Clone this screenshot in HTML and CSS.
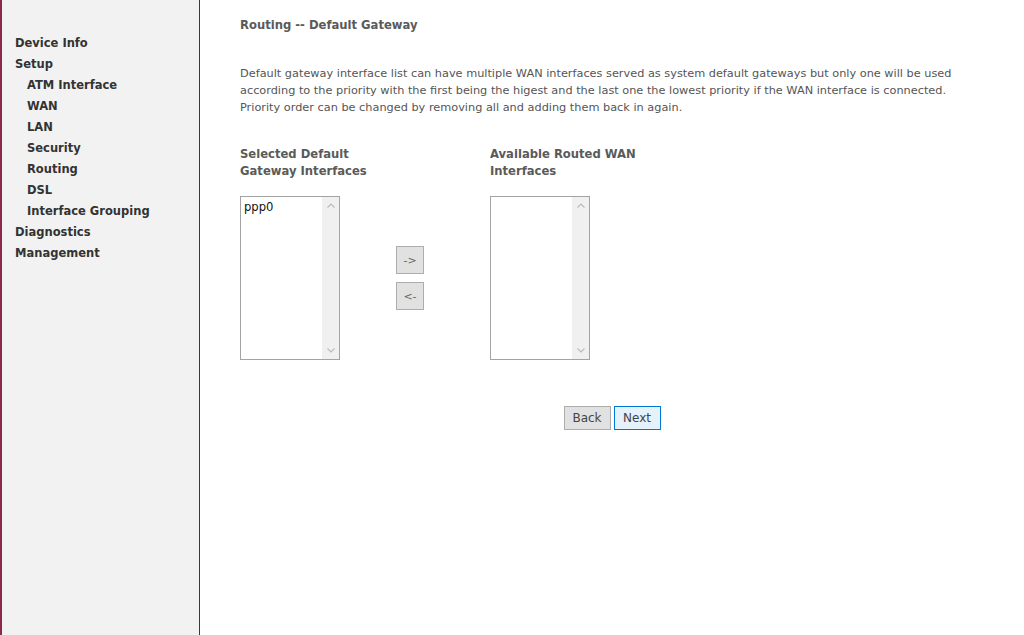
FILE: index.html
```html
<!DOCTYPE html>
<html>
<head>
<meta charset="utf-8">
<title>Routing -- Default Gateway</title>
<link rel="stylesheet" href="styles.css">
</head>
<body>
<div class="page">
  <nav class="sidebar">
    <ul class="menu">
      <li class="top">Device Info</li>
      <li class="top">Setup</li>
      <li class="sub">ATM Interface</li>
      <li class="sub">WAN</li>
      <li class="sub">LAN</li>
      <li class="sub">Security</li>
      <li class="sub">Routing</li>
      <li class="sub">DSL</li>
      <li class="sub">Interface Grouping</li>
      <li class="top">Diagnostics</li>
      <li class="top">Management</li>
    </ul>
  </nav>
  <main class="content">
    <h1 class="title">Routing -- Default Gateway</h1>
    <p class="desc">Default gateway interface list can have multiple WAN interfaces served as system default gateways but only one will be used<br>according to the priority with the first being the higest and the last one the lowest priority if the WAN interface is connected.<br>Priority order can be changed by removing all and adding them back in again.</p>
    <div class="lists">
      <div class="col col-left">
        <div class="col-head">Selected Default<br>Gateway Interfaces</div>
        <div class="listbox">
          <div class="items"><div class="item">ppp0</div></div>
          <div class="track">
            <svg class="arrow" width="8" height="5" viewBox="0 0 8 5"><polyline points="0.5,4.5 4,1 7.5,4.5" fill="none" stroke="#bcbcbc" stroke-width="1.2"/></svg>
            <svg class="arrow" width="8" height="5" viewBox="0 0 8 5"><polyline points="0.5,0.5 4,4 7.5,0.5" fill="none" stroke="#bcbcbc" stroke-width="1.2"/></svg>
          </div>
        </div>
      </div>
      <div class="col col-mid">
        <div class="col-head">&nbsp;<br>&nbsp;</div>
        <div class="movers">
          <button class="mover">-&gt;</button>
          <button class="mover">&lt;-</button>
        </div>
      </div>
      <div class="col col-right">
        <div class="col-head">Available Routed WAN<br>Interfaces</div>
        <div class="listbox">
          <div class="items"></div>
          <div class="track">
            <svg class="arrow" width="8" height="5" viewBox="0 0 8 5"><polyline points="0.5,4.5 4,1 7.5,4.5" fill="none" stroke="#bcbcbc" stroke-width="1.2"/></svg>
            <svg class="arrow" width="8" height="5" viewBox="0 0 8 5"><polyline points="0.5,0.5 4,4 7.5,0.5" fill="none" stroke="#bcbcbc" stroke-width="1.2"/></svg>
          </div>
        </div>
      </div>
    </div>
    <div class="actions">
      <button class="btn">Back</button>
      <button class="btn btn-focus">Next</button>
    </div>
  </main>
</div>
</body>
</html>
```

FILE: styles.css
```css
html, body {
  margin: 0;
  padding: 0;
  background: #ffffff;
  font-family: "DejaVu Sans", Verdana, sans-serif;
}

.page {
  display: flex;
  min-height: 635px;
}

.sidebar {
  width: 197px;
  flex: none;
  background: #f2f2f2;
  border-left: 2px solid #8a2a48;
  border-right: 1px solid #5e2440;
}

.menu {
  list-style: none;
  margin: 0;
  padding: 33px 0 0 0;
}

.menu li {
  font-size: 11.5px;
  font-weight: bold;
  color: #333333;
  line-height: 21px;
  height: 21px;
  white-space: nowrap;
}

.menu .top { padding-left: 13px; }
.menu .sub { padding-left: 25px; }

.content {
  flex: 1;
  padding: 0 40px;
  color: #555555;
}

.title {
  margin: 17px 0 0 0;
  font-size: 11.6px;
  font-weight: bold;
  line-height: 17px;
  color: #5a5a5a;
}

.desc {
  margin: 31px 0 0 0;
  font-size: 11.3px;
  line-height: 17px;
  color: #555555;
}

.lists {
  display: flex;
  margin-top: 30px;
}

.col {
  display: flex;
  flex-direction: column;
}

.col-left { width: 156px; }
.col-mid { width: 94px; }

.col-head {
  font-size: 11.6px;
  font-weight: bold;
  line-height: 17px;
  color: #5a5a5a;
  height: 34px;
  margin-bottom: 16px;
  white-space: nowrap;
}

.listbox {
  width: 98px;
  height: 162px;
  border: 1px solid #a3a3a3;
  display: flex;
  background: #fff;
}

.items {
  flex: 1;
  padding: 3px 0 0 3px;
}

.item {
  font-size: 11.6px;
  line-height: 15px;
  color: #111;
}

.track {
  width: 17px;
  background: #f0f0f0;
  display: flex;
  flex-direction: column;
  justify-content: space-between;
  align-items: center;
  padding: 6px 0;
  box-sizing: border-box;
}

.arrow {
  display: block;
}

.movers {
  height: 164px;
  display: flex;
  flex-direction: column;
  justify-content: center;
  gap: 8px;
}

.mover {
  width: 28px;
  height: 28px;
  padding: 0;
  margin: 0;
  border: 1px solid #adadad;
  background: #e1e1e1;
  font-family: "DejaVu Sans", Verdana, sans-serif;
  font-size: 11px;
  color: #666;
  border-radius: 0;
}

.actions {
  display: flex;
  justify-content: center;
  gap: 3px;
  margin-top: 46px;
}

.btn {
  width: 47px;
  height: 24px;
  padding: 0;
  margin: 0;
  border: 1px solid #adadad;
  background: #e1e1e1;
  font-family: "DejaVu Sans", Verdana, sans-serif;
  font-size: 12px;
  color: #444;
  border-radius: 0;
}

.btn-focus {
  border-color: #0078d7;
  background: #e5f1fb;
}
```
